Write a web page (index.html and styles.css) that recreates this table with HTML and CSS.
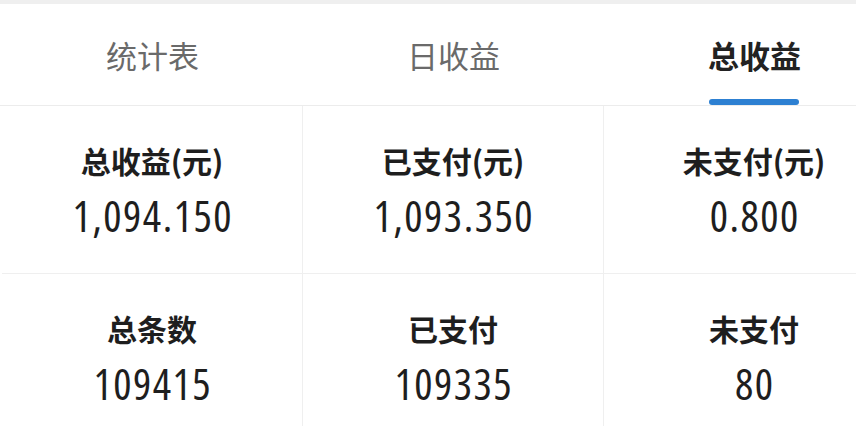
FILE: index.html
```html
<!DOCTYPE html>
<html lang="zh-CN">
<head>
<meta charset="utf-8">
<title>总收益</title>
<link rel="stylesheet" href="styles.css">
</head>
<body>
<div class="page">
  <div class="topband"></div>
  <nav class="tabs">
    <div class="tab">统计表</div>
    <div class="tab">日收益</div>
    <div class="tab active">总收益</div>
  </nav>
  <section class="grid">
    <div class="cell"><div class="label">总收益(元)</div><div class="value">1,094.150</div></div>
    <div class="cell"><div class="label">已支付(元)</div><div class="value">1,093.350</div></div>
    <div class="cell"><div class="label">未支付(元)</div><div class="value">0.800</div></div>
    <div class="cell"><div class="label">总条数</div><div class="value">109415</div></div>
    <div class="cell"><div class="label">已支付</div><div class="value">109335</div></div>
    <div class="cell"><div class="label">未支付</div><div class="value">80</div></div>
  </section>
</div>
</body>
</html>
```
FILE: styles.css
```css
html, body {
  margin: 0;
  padding: 0;
  background: #fff;
  overflow: hidden;
}
body {
  font-family: "Noto Sans CJK SC", "Noto Sans", sans-serif;
  color: #222;
}
.page {
  width: 906px;
}
.topband {
  height: 4px;
  background: #efefef;
}
.tabs {
  display: grid;
  grid-template-columns: repeat(3, 301px);
  padding-left: 2px;
  height: 101px;
  border-bottom: 1px solid #ececec;
}
.tab {
  display: flex;
  align-items: center;
  justify-content: center;
  font-size: 31px;
  color: #6a6a6a;
  position: relative;
}
.tab.active {
  color: #222;
  font-weight: 700;
}
.tab.active::after {
  content: "";
  position: absolute;
  left: 105px;
  bottom: 0;
  width: 90px;
  height: 6px;
  border-radius: 3px;
  background: #2d80d2;
}
.grid {
  display: grid;
  grid-template-columns: repeat(3, 301px);
  grid-auto-rows: 168px;
  padding-left: 2px;
}
.cell {
  display: flex;
  flex-direction: column;
  align-items: center;
  justify-content: center;
  border-bottom: 1px solid #efefef;
  border-right: 1px solid #efefef;
}
.label {
  font-size: 30px;
  font-weight: 700;
  line-height: 40px;
  color: #1e1e1e;
}
.value {
  margin-top: 12px;
  margin-right: -1.5px;
  font-family: "Open Sans", "Roboto", sans-serif;
  font-stretch: 85%;
  font-weight: 400;
  font-size: 43px;
  letter-spacing: 1.5px;
  line-height: 48px;
  color: #1e1e1e;
}
```
